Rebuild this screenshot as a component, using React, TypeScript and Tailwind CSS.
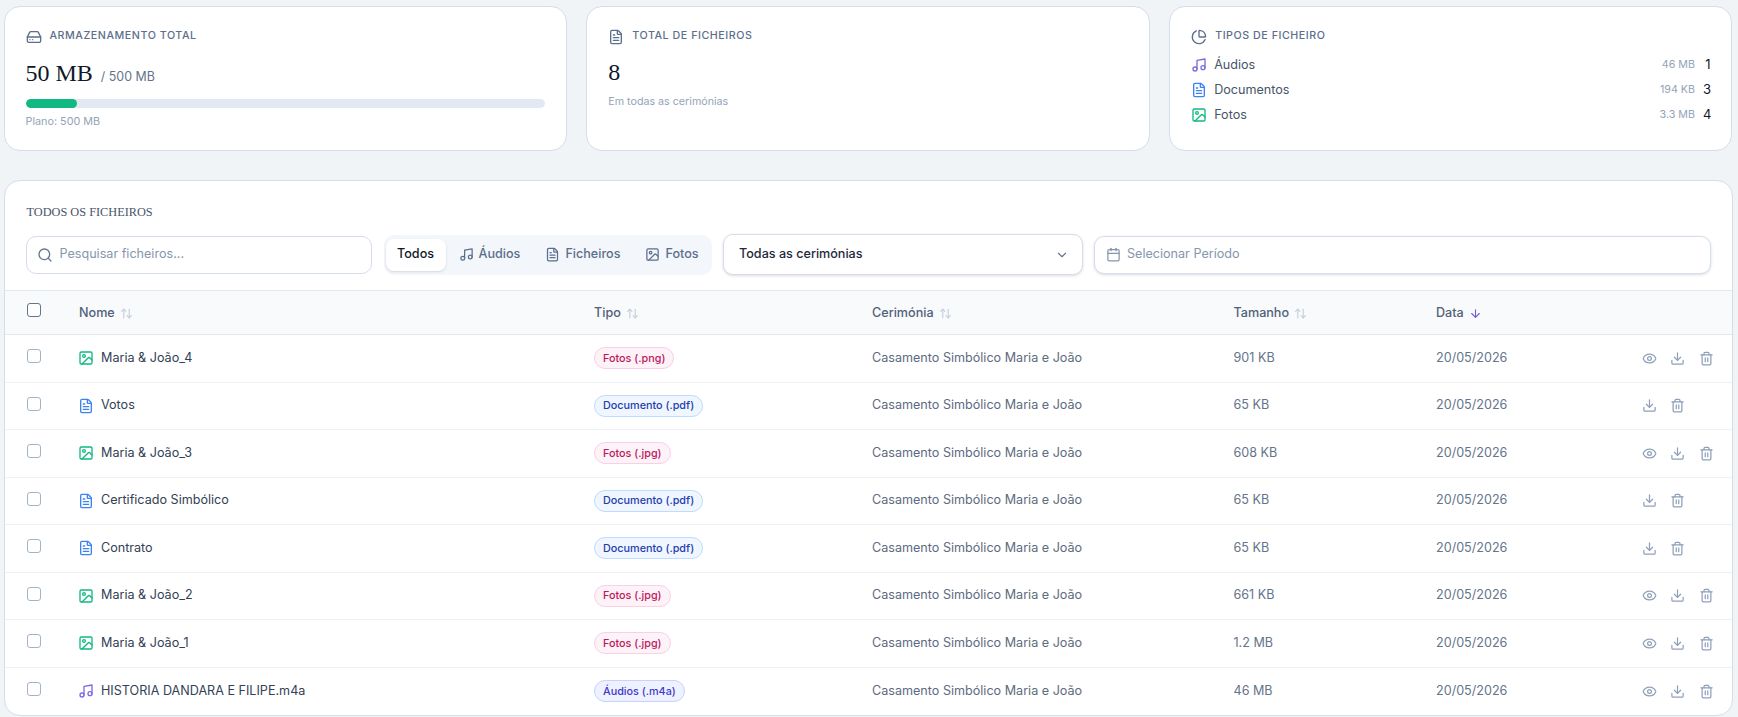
import React from "react";
import {
  ArrowDown,
  ArrowUpDown,
  Calendar,
  ChartPie,
  ChevronDown,
  Download,
  Eye,
  FileText,
  HardDrive,
  Image,
  Music,
  Search,
  Trash2,
} from "lucide-react";

type Kind = "foto" | "doc" | "audio";

interface FileRow {
  name: string;
  kind: Kind;
  badge: string;
  size: string;
}

const CEREMONY = "Casamento Simbólico Maria e João";
const DATE = "20/05/2026";

const rows: FileRow[] = [
  { name: "Maria & João_4", kind: "foto", badge: "Fotos (.png)", size: "901 KB" },
  { name: "Votos", kind: "doc", badge: "Documento (.pdf)", size: "65 KB" },
  { name: "Maria & João_3", kind: "foto", badge: "Fotos (.jpg)", size: "608 KB" },
  { name: "Certificado Simbólico", kind: "doc", badge: "Documento (.pdf)", size: "65 KB" },
  { name: "Contrato", kind: "doc", badge: "Documento (.pdf)", size: "65 KB" },
  { name: "Maria & João_2", kind: "foto", badge: "Fotos (.jpg)", size: "661 KB" },
  { name: "Maria & João_1", kind: "foto", badge: "Fotos (.jpg)", size: "1.2 MB" },
  { name: "HISTORIA DANDARA E FILIPE.m4a", kind: "audio", badge: "Áudios (.m4a)", size: "46 MB" },
];

const badgeStyles: Record<Kind, string> = {
  foto: "bg-[#fdf2f8] border-[#fbcfe8] text-[#be185d]",
  doc: "bg-[#eff6ff] border-[#bfdbfe] text-[#1e40af]",
  audio: "bg-[#eef2ff] border-[#c7d2fe] text-[#4338ca]",
};

const KindIcon = ({ kind }: { kind: Kind }) => {
  if (kind === "foto") return <Image size={16} className="text-[#10b981] shrink-0" />;
  if (kind === "doc") return <FileText size={16} className="text-[#3b82f6] shrink-0" />;
  return <Music size={16} className="text-[#7c6be0] shrink-0" />;
};

const Card = ({ children }: { children: React.ReactNode }) => (
  <div className="h-[145px] rounded-[16px] border border-[#d5dde9] bg-white px-[21px] pt-[20px]">
    {children}
  </div>
);

const CardTitle = ({ icon, label }: { icon: React.ReactNode; label: string }) => (
  <div className="flex h-5 items-center gap-[8px] text-[10.7px] font-medium uppercase tracking-[0.05em] text-[#5b6f8c]">
    {icon}
    <span>{label}</span>
  </div>
);

const TypeRow = ({ kind, label, size, count }: { kind: Kind; label: string; size: string; count: number }) => (
  <div className="flex h-5 items-center">
    <KindIcon kind={kind} />
    <span className="ml-[7px] text-[12.6px] text-[#475569]">{label}</span>
    <span className="ml-auto text-[10.7px] text-[#94a3b8]">{size}</span>
    <span className="ml-2 w-[7.5px] text-right text-[13px] text-[#0f172a]">{count}</span>
  </div>
);

const SortHead = ({ label, active = false }: { label: string; active?: boolean }) => (
  <div className="flex items-center gap-[5px] pt-[2px] text-[12.6px] font-medium text-[#526177]">
    <span>{label}</span>
    {active ? (
      <ArrowDown size={13} className="text-[#6d5bd0]" />
    ) : (
      <ArrowUpDown size={13} className="text-[#c3cedb]" />
    )}
  </div>
);

const Check = ({ strong = false }: { strong?: boolean }) => (
  <span
    className={`block h-[14px] w-[14px] -translate-y-[2px] rounded-[3px] border-[1.5px] bg-white ${
      strong ? "border-[#64748b]" : "border-[#a3b4c8]"
    }`}
  />
);

const TabButton = ({ icon, label, active = false }: { icon?: React.ReactNode; label: string; active?: boolean }) => (
  <div
    className={`flex h-8 items-center gap-[5px] rounded-[8px] px-3 text-[12.6px] font-medium ${
      active ? "bg-white px-[11.5px] text-[#0f172a] shadow-sm" : "text-[#5b6f8c]"
    }`}
  >
    {icon}
    <span>{label}</span>
  </div>
);

const App = () => {
  return (
    <div className="h-[717px] overflow-hidden bg-[#f1f4f7] pl-[3.5px] pr-[5.5px] pt-[5.5px] font-['Inter',sans-serif]">
      <div className="grid grid-cols-3 gap-[19.5px]">
        <Card>
          <CardTitle icon={<HardDrive size={16} />} label="Armazenamento Total" />
          <div className="mt-[8.5px] flex h-8 items-baseline gap-[8px]">
            <span className="font-['Liberation_Serif',serif] text-[24px] text-[#0f172a]">50 MB</span>
            <span className="text-[12.4px] text-[#64748b]">/ 500 MB</span>
          </div>
          <div className="mt-[12px] h-[9px] overflow-hidden rounded-full bg-[#e2e9f3]">
            <div className="h-full w-[10%] rounded-full bg-[#10b981]" />
          </div>
          <div className="mt-[5.5px] h-4 text-[10.8px] leading-4 text-[#94a3b8]">Plano: 500 MB</div>
        </Card>
        <Card>
          <CardTitle icon={<FileText size={16} />} label="Total de Ficheiros" />
          <div className="mt-[9.5px] h-8 font-['Liberation_Serif',serif] text-[24px] leading-8 text-[#0f172a]">8</div>
          <div className="mt-[5.5px] h-4 text-[10.7px] leading-4 text-[#94a3b8]">Em todas as cerimónias</div>
        </Card>
        <Card>
          <CardTitle icon={<ChartPie size={16} />} label="Tipos de Ficheiro" />
          <div className="mt-[8.5px] flex flex-col gap-[5px]">
            <TypeRow kind="audio" label="Áudios" size="46 MB" count={1} />
            <TypeRow kind="doc" label="Documentos" size="194 KB" count={3} />
            <TypeRow kind="foto" label="Fotos" size="3.3 MB" count={4} />
          </div>
        </Card>
      </div>

      <div className="mt-[29px] overflow-hidden rounded-[16px] border border-[#d5dde9] bg-white">
        <div className="pl-[21px] pr-[21px] pt-[23.5px]">
          <h2 className="ml-px h-4 font-['Liberation_Serif',serif] text-[12.3px] font-normal uppercase leading-4 text-[#475569]">
            Todos os ficheiros
          </h2>
          <div className="mt-[14px] flex h-[41px] items-center">
            <div className="flex h-[38px] w-[346px] items-center rounded-[10px] border border-[#d5dde9] bg-white pl-[10px]">
              <Search size={16} className="text-[#64748b]" />
              <span className="ml-[7px] text-[12.6px] text-[#8696ac]">Pesquisar ficheiros...</span>
            </div>
            <div className="ml-[12.5px] flex h-[40px] w-[328px] items-center gap-px rounded-[10px] bg-[#f3f6fb] px-[1.5px]">
              <TabButton label="Todos" active />
              <TabButton icon={<Music size={15} />} label="Áudios" />
              <TabButton icon={<FileText size={15} />} label="Ficheiros" />
              <TabButton icon={<Image size={15} />} label="Fotos" />
            </div>
            <div className="ml-[11px] flex h-[41px] w-[360px] items-center justify-between rounded-[10px] border border-[#d5dde9] bg-white pl-[15px] pr-[13px] shadow-[0_1px_3px_rgba(15,23,42,0.15)]">
              <span className="text-[12.6px] font-medium text-[#1e293b]">Todas as cerimónias</span>
              <ChevronDown size={14} className="text-[#64748b]" />
            </div>
            <div className="ml-[11px] flex h-[38px] flex-1 items-center rounded-[10px] border border-[#d5dde9] bg-white pl-[11px] shadow-[0_1px_3px_rgba(15,23,42,0.15)]">
              <Calendar size={15} className="text-[#8696ac]" />
              <span className="ml-[6px] text-[12.6px] text-[#8696ac]">Selecionar Período</span>
            </div>
          </div>
        </div>

        <table className="mt-[14.5px] w-full table-fixed border-collapse text-left text-[12.6px]">
          <colgroup>
            <col className="w-[74.5px]" />
            <col className="w-[515px]" />
            <col className="w-[278px]" />
            <col className="w-[361.5px]" />
            <col className="w-[202.5px]" />
            <col className="w-[199px]" />
            <col />
          </colgroup>
          <thead>
            <tr className="h-[44.5px] border-y border-[#e2e8f0] bg-[#f8fafc]">
              <th className="pl-[22.5px] font-normal">
                <Check strong />
              </th>
              <th className="font-normal">
                <SortHead label="Nome" />
              </th>
              <th className="font-normal">
                <SortHead label="Tipo" />
              </th>
              <th className="font-normal">
                <SortHead label="Cerimónia" />
              </th>
              <th className="font-normal">
                <SortHead label="Tamanho" />
              </th>
              <th className="font-normal">
                <SortHead label="Data" active />
              </th>
              <th />
            </tr>
          </thead>
          <tbody>
            {rows.map((row, i) => (
              <tr key={row.name} className={`h-[47.5px] ${i < rows.length - 1 ? "border-b border-[#eef2f6]" : ""}`}>
                <td className="pl-[22.5px]">
                  <Check />
                </td>
                <td>
                  <div className="-ml-px flex items-center gap-[7px] text-[#334155]">
                    <KindIcon kind={row.kind} />
                    <span>{row.name}</span>
                  </div>
                </td>
                <td>
                  <span
                    className={`inline-block rounded-full border px-[8px] py-[2.5px] text-[10.8px] font-medium leading-[15px] ${badgeStyles[row.kind]}`}
                  >
                    {row.badge}
                  </span>
                </td>
                <td className="text-[#5d6b80]">{CEREMONY}</td>
                <td className="text-[#64748b]">{row.size}</td>
                <td className="text-[#64748b]">{DATE}</td>
                <td>
                  <div className="flex items-center text-[#8ea0b8]">
                    {row.kind !== "doc" && (
                      <span className="flex w-[28.5px] justify-center">
                        <Eye size={15} />
                      </span>
                    )}
                    <span className="flex w-[28.5px] justify-center">
                      <Download size={15} />
                    </span>
                    <span className="flex w-[28.5px] justify-center">
                      <Trash2 size={15} />
                    </span>
                  </div>
                </td>
              </tr>
            ))}
          </tbody>
        </table>
      </div>
    </div>
  );
};

export default App;
